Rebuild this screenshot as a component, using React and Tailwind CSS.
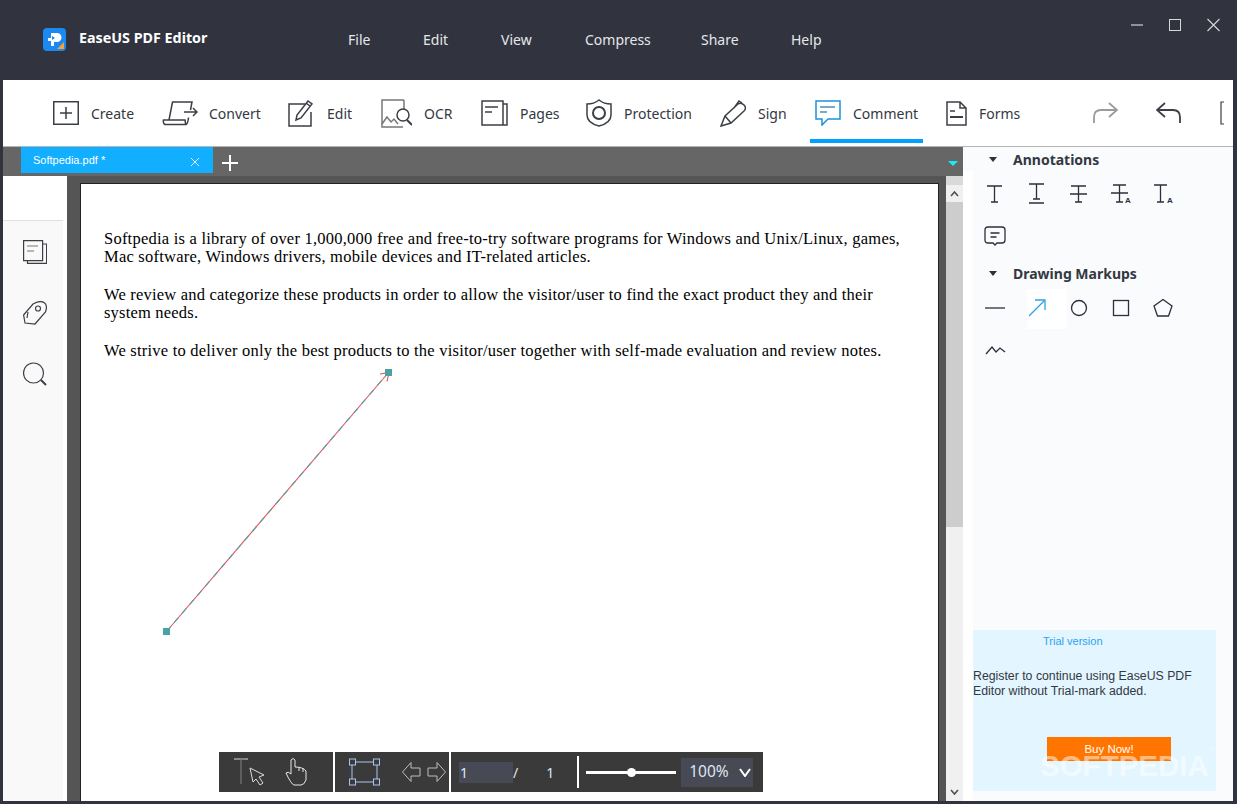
const sans = "font-['Noto_Sans',sans-serif]";

function Tool({ w, label, active, children }) {
  return (
    <div className={`relative flex h-full items-center ${w}`}>
      {children}
      <span className="mt-[1px] text-[14px] text-[#333842]">{label}</span>
      {active && <div className="absolute bottom-[3px] left-[-5px] h-[4px] w-[113px] bg-[#00a2ff]" />}
    </div>
  );
}

const S = { fill: "none", stroke: "#3c3f46", strokeWidth: 1.5 };

function Ic({ w, h, ml, children }) {
  return <svg width={w} height={h} viewBox={`0 0 ${w} ${h}`} className={`shrink-0 ${ml}`} {...S}>{children}</svg>;
}

function TopMenu() {
  return (
    <div className="flex h-[80px] shrink-0 bg-[#31343f]">
      <div className="ml-[43px] mt-[28px] flex h-[23px] w-[23px] items-center justify-center overflow-hidden rounded-[4px] bg-[#1b8af0]">
        <svg width="23" height="23" viewBox="0 0 23 23">
          <path d="M8 5h6a4.500 4.500 0 0 1 0 9h-3v4H8v-5H5v-3h3z" fill="#fff" />
          <path d="M9 8l3 2-3 2z" fill="#1b8af0" />
          <path d="M14 21l7-7v7z" fill="#f2a33a" />
        </svg>
      </div>
      <div className="ml-[13px] mt-[28px] h-[20px] w-[128px] whitespace-nowrap text-[14.3px] font-bold leading-[20px] text-white">EaseUS PDF Editor</div>
      <nav className="ml-[141px] mt-[30px] flex h-[20px] text-[14px] leading-[20px] text-[#e6e7ea]">
        <span className="w-[75px]">File</span>
        <span className="w-[78px]">Edit</span>
        <span className="w-[84px]">View</span>
        <span className="w-[116px]">Compress</span>
        <span className="w-[90px]">Share</span>
        <span>Help</span>
      </nav>
      <div className="ml-auto mr-[17px] mt-[18px] flex h-[14px] items-center gap-[26px]">
        <svg width="12" height="14" viewBox="0 0 12 14"><path d="M0 7h12" stroke="#a9abb0" strokeWidth="1.600" /></svg>
        <svg width="12" height="14" viewBox="0 0 12 14"><rect x=".5" y="1.500" width="11" height="11" fill="none" stroke="#d5d6d9" /></svg>
        <svg width="13" height="14" viewBox="0 0 13 14"><path d="M.5 1l12 12M12.500 1l-12 12" stroke="#d5d6d9" strokeWidth="1.100" /></svg>
      </div>
    </div>
  );
}

function Toolbar() {
  return (
    <div className="flex h-[67px] shrink-0 items-center overflow-hidden border-b border-[#b5b5b5] bg-white pl-[50px]">
      <Tool w="w-[109px]" label="Create">
        <Ic w={26} h={24} ml="mr-[12px]"><rect x=".75" y=".75" width="24.500" height="22.500" /><path d="M7 12h12M13 6v12" /></Ic>
      </Tool>
      <Tool w="w-[126px]" label="Convert">
        <Ic w={36} h={26} ml="mr-[11px]"><path d="M7 20L10.500 2H30l-1.500 8M7 20H1.500q-.8 3 1.500 4.500H24q2-1 2.500-7M7 20h16q.5 2 .5 4" /><path d="M22 12h13M31 8l4 4-4 4" /></Ic>
      </Tool>
      <Tool w="w-[93px]" label="Edit">
        <Ic w={27} h={28} ml="mr-[12px]"><path d="M17 5H1v22h22V13" /><path d="M8 21l1-5L20 2l4 3-11 14zM18 4l4 3" /></Ic>
      </Tool>
      <Tool w="w-[100px]" label="OCR">
        <Ic w={31} h={29} ml="mr-[12px]"><path d="M23 1H1v27h21M23 1v9" stroke="#777" /><path d="M1 25l5-7 4 5 3-3 4 5" stroke="#777" /><circle cx="22" cy="16" r="6" /><path d="M26 21l5 5" strokeWidth="2" /></Ic>
      </Tool>
      <Tool w="w-[105px]" label="Pages">
        <Ic w={27} h={26} ml="mr-[12px]"><path d="M1 1h21v24H1zM22 4h4v21H22" /><path d="M4 7h13M4 12h7" /></Ic>
      </Tool>
      <Tool w="w-[134px]" label="Protection">
        <Ic w={26} h={28} ml="mr-[12px]"><path d="M13 1q5 4 12 4v11q0 8-12 11Q1 24 1 16V5q7 0 12-4z" /><circle cx="13" cy="14" r="6" strokeWidth="2" /></Ic>
      </Tool>
      <Tool w="w-[95px]" label="Sign">
        <Ic w={26} h={27} ml="mr-[12px]"><path d="M1 26l4-10L18 4q3-2 6 1t0 6L11 23zM5 16l6 7M14 8l5-7 3 2" /></Ic>
      </Tool>
      <Tool w="w-[131px]" label="Comment" active>
        <svg width="26" height="26" viewBox="0 0 26 26" fill="none" stroke="#1d92d6" strokeWidth="1.500" className="mr-[12px] shrink-0"><path d="M1 1h24v18H13l-6 6v-6H1z" /><path d="M5 7h15M5 12h7" stroke="#4a8fb8" /></svg>
      </Tool>
      <Tool w="w-[140px]" label="Forms">
        <Ic w={21} h={25} ml="mr-[12px]"><path d="M1 1h13l6 6v17H1zM14 1v6h6" /><path d="M4 10h5" /><path d="M4 16h13" strokeWidth="2" /></Ic>
      </Tool>
      <svg width="26" height="22" viewBox="0 0 26 22" fill="none" stroke="#9a9a9a" strokeWidth="1.800" className="ml-[6px] shrink-0"><path d="M2 21v-6q0-7 7-7h15M17 1l8 7-8 7" /></svg>
      <svg width="26" height="22" viewBox="0 0 26 22" fill="none" stroke="#3c3f46" strokeWidth="1.800" className="ml-[38px] shrink-0"><path d="M24 21v-6q0-7-7-7H2M9 1L1 8l8 7" /></svg>
      <svg width="4" height="24" viewBox="0 0 4 24" fill="none" stroke="#3c3f46" strokeWidth="1.200" className="ml-[38px] shrink-0"><path d="M4 1H1v22h3" /></svg>
    </div>
  );
}

function TabBar() {
  return (
    <div className="flex h-[29px] shrink-0 items-start bg-[#666666] pl-[18px]">
      <div className="flex h-[26px] w-[192px] items-center bg-[#12aeff] pl-[12px] font-['Liberation_Sans',sans-serif] text-[11px] text-white">
        Softpedia.pdf *
        <svg width="10" height="10" viewBox="0 0 10 10" className="ml-auto mr-[13px] mt-[3px]"><path d="M1 1l8 8M9 1l-8 8" stroke="#e8f6ff" /></svg>
      </div>
      <svg width="16" height="16" viewBox="0 0 16 16" className="ml-[9px] mt-[8px]"><path d="M8 0v16M0 8h16" stroke="#fff" strokeWidth="2" /></svg>
      <div className="ml-auto mr-[5px] mt-[14px] h-0 w-0 border-x-[5px] border-t-[5px] border-x-transparent border-t-[#1de9f5]" />
    </div>
  );
}

function LeftRail() {
  return (
    <div className="flex w-[64px] shrink-0 flex-col bg-white">
      <div className="h-[45px] w-[60px] border-b border-[#e0e0e0]" />
      <div className="flex w-[60px] flex-1 flex-col items-center gap-[37px] bg-[#f9f9f9] pl-[4px] pt-[19px]">
        <svg width="24" height="24" viewBox="0 0 24 24" fill="none" stroke="#3c3f46" strokeWidth="1.200"><path d="M.6.6h19v20H.6zM19.600 4h4v19.400H4.500v-3" /><path d="M4 6h11M4 11h7" stroke="#777" /></svg>
        <svg width="24" height="24" viewBox="0 0 24 24" fill="none" stroke="#3c3f46" strokeWidth="1.200"><path d="M.6 14L10 3Q17-1 21 1.500t1.500 9.500L12 23l-10-1z" /><circle cx="15" cy="7.500" r="2.500" /><path d="M4 17l1-6" /></svg>
        <svg width="24" height="24" viewBox="0 0 24 24" fill="none" stroke="#3c3f46" strokeWidth="1.200"><circle cx="10.500" cy="11" r="10" /><path d="M18 18l5 5" strokeWidth="2" /></svg>
      </div>
    </div>
  );
}

function PdfPage() {
  return (
    <div className="relative ml-[13px] mt-[7px] h-[700px] w-[859px] shrink-0 border border-[#222] bg-white pl-[23px] pt-[46px] font-['Liberation_Serif',serif] text-[16.5px] leading-[18px] text-black">
      <p className="whitespace-nowrap tracking-[0.23px]">Softpedia is a library of over 1,000,000 free and free-to-try software programs for Windows and Unix/Linux, games,<br />Mac software, Windows drivers, mobile devices and IT-related articles.</p>
      <p className="mt-[20px] whitespace-nowrap tracking-[0.2px]">We review and categorize these products in order to allow the visitor/user to find the exact product they and their<br />system needs.</p>
      <p className="mt-[20px] whitespace-nowrap tracking-[0.22px]">We strive to deliver only the best products to the visitor/user together with self-made evaluation and review notes.</p>
      <svg width="240" height="275" viewBox="0 0 240 275" fill="none" className="absolute left-[80px] top-[183px]">
        <path d="M5.500 264.500L227.500 5.500" stroke="#ef4d55" strokeWidth="1.100" />
        <path d="M5.500 264.500L227.500 5.500" stroke="#45a5a5" strokeWidth="1.100" strokeDasharray="6 6" />
        <path d="M219 7l9-1.500-2 9" stroke="#e2484f" strokeWidth="1" />
        <rect x="224" y="2" width="7" height="7" fill="#4aa3a3" />
        <rect x="2" y="261" width="7" height="7" fill="#4aa3a3" />
      </svg>
    </div>
  );
}

function BottomBar() {
  return (
    <div className="absolute bottom-[9px] left-[216px] flex h-[40px] gap-[2px] text-[#d6d8dd]">
      <div className="flex w-[114px] items-center bg-[#3a3a3a] pl-[15px]">
        <svg width="38" height="30" viewBox="0 0 38 30" fill="none" stroke="#dcdcdc" strokeWidth="1"><path d="M0 2h14" /><path d="M11 2h-4v25" stroke="#777" strokeWidth="1.200" /><path d="M16 11l14 7-5 2 4 6-3 2-4-6-3 3z" /></svg>
        <svg width="24" height="30" viewBox="0 0 24 30" fill="none" stroke="#e8e8e8" strokeWidth="1" className="ml-[13px]"><path d="M6 17V3q2-3 4 0v7q8 0 11 4v9q-2 5-5 5H9q-3-1-8-12 2-2 5 1zM14 10v4M18 11v4" /></svg>
      </div>
      <div className="flex w-[114px] items-center bg-[#3a3a3a] pl-[14px]">
        <svg width="32" height="30" viewBox="0 0 32 30" fill="none" stroke="#a9c4ee" strokeWidth="1"><path d="M6 5h19M3 8v14M28 8v14M6 25h19" /><rect x=".5" y="2" width="6" height="6" /><rect x="24.500" y="2" width="6" height="6" /><rect x=".5" y="22" width="6" height="6" /><rect x="24.500" y="22" width="6" height="6" /></svg>
        <svg width="44" height="22" viewBox="0 0 44 22" fill="none" stroke="#bdbdbd" strokeWidth="1" className="ml-[21px] shrink-0"><path d="M.5 11L9 1.500V7h9v8H9v5.500z" /><path d="M43.500 11L35 1.500V7h-9v8h9v5.500z" /></svg>
      </div>
      <div className="relative flex w-[312px] items-center bg-[#3a3a3a] text-[14px]">
        <div className="ml-[8px] h-[21px] w-[54px] bg-[#474a55] pl-[1px] leading-[21px] text-[#d8e8f8]">1</div>
        <span className="text-[#e6e6e6]">/</span>
        <span className="ml-[28px] text-[#d8e8f8]">1</span>
        <div className="ml-[23px] h-[32px] w-[2px] bg-white" />
        <div className="relative ml-[7px] h-[3px] w-[90px] bg-white">
          <div className="absolute left-[41px] top-[-3px] h-[9px] w-[9px] rounded-full bg-white" />
        </div>
        <div className="ml-[5px] flex h-[29px] w-[72px] items-center bg-[#474a55] pl-[8px] text-[15.5px] text-[#dfe6ef]">
          100%
          <svg width="12" height="9" viewBox="0 0 12 9" className="ml-[10px]"><path d="M1 1l5 7 5-7" fill="none" stroke="#fff" strokeWidth="2" /></svg>
        </div>
      </div>
    </div>
  );
}

function Scrollbar() {
  return (
    <div className="flex w-[17px] shrink-0 flex-col bg-[#f0f0f0]">
      <div className="h-[9px] bg-[#d9d9d9]" />
      <div className="flex h-[17px] items-center justify-center">
        <svg width="9" height="7" viewBox="0 0 9 7"><path d="M1 6l3.500-4L8 6" fill="none" stroke="#505050" strokeWidth="1.600" /></svg>
      </div>
      <div className="h-[325px] bg-[#cdcdcd]" />
      <div className="flex flex-1 items-end justify-center pb-[5px]">
        <svg width="9" height="7" viewBox="0 0 9 7"><path d="M1 1l3.500 4L8 1" fill="none" stroke="#505050" strokeWidth="1.600" /></svg>
      </div>
    </div>
  );
}

function Section({ title, children }) {
  return (
    <>
      <div className="flex h-[24px] items-center pl-[16px]">
        <div className="h-0 w-0 border-x-[4px] border-t-[5px] border-x-transparent border-t-[#2d2f3a]" />
        <span className="ml-[16px] text-[14px] font-bold text-[#333842]">{title}</span>
      </div>
      <div className="grid grid-cols-[repeat(5,42px)] auto-rows-[42px] pl-[1px] pt-[2px]">{children}</div>
    </>
  );
}

function Cell({ hl, children }) {
  return <div className="relative flex h-[42px] w-[42px] items-center justify-center">
    {hl && <div className="absolute left-[11px] top-[2px] h-[40px] w-[40px] bg-white" />}
    <svg width="24" height="24" viewBox="0 0 24 24" fill="none" stroke={hl ? "#2ba2e6" : "#2d2f3a"} strokeWidth="1.300" className="relative">{children}</svg>
  </div>;
}

const A = () => <text x="16" y="21" fontSize="8" fontWeight="700" fontFamily="Liberation Sans" fill="#2d2f3a" stroke="none">A</text>;

function RightPanel() {
  return (
    <div className="relative flex w-[270px] shrink-0 flex-col bg-[#fafbfd] pl-[10px]">
      <div className="absolute bottom-0 left-0 top-[24px] w-[10px] bg-white" />
      <div className="relative w-[243px] flex-1">
        <Section title="Annotations">
          <Cell><path d="M4 4h15M11.500 4v16M8 20h7" /></Cell>
          <Cell><path d="M4 2h15M11.500 2v15M8 17h7M4 21h15" /></Cell>
          <Cell><path d="M4 4h15M11.500 4v16M8 20h7M3 12h17" /></Cell>
          <Cell><path d="M4 3h13M10.500 3v17M7 20h7M2 11h17" /><A /></Cell>
          <Cell><path d="M3 3h13M9.500 3v17M6 20h7" /><A /></Cell>
          <Cell><path d="M5 3h14q3 0 3 3v10q0 3-3 3h-5l-2 2-2-2H5q-3 0-3-3V6q0-3 3-3zM7.500 9h9M7.500 13h6" /></Cell>
        </Section>
        <div className="h-[4px]" />
        <Section title="Drawing Markups">
          <Cell><path d="M2 12h20" /></Cell>
          <Cell hl><path d="M4 20L19 5M10 4h10v10" /></Cell>
          <Cell><circle cx="12" cy="12" r="7.500" /></Cell>
          <Cell><rect x="4.500" y="4.500" width="15" height="15" /></Cell>
          <Cell><path d="M12 3.500l9 6.500-3.500 10h-11L3 10z" /></Cell>
          <Cell><path d="M3 16l6-7 4 5 4-4 5 4" /></Cell>
        </Section>
        <div className="absolute bottom-[10px] left-0 flex h-[161px] w-[243px] flex-col bg-[#e3f5ff] font-['Liberation_Sans',sans-serif] text-[12.3px] text-[#333842]">
          <div className="ml-[70px] mt-[4px] h-[14px] text-[11px] leading-[14px] text-[#2aa3f0]">Trial version</div>
          <p className="mt-[21px] whitespace-nowrap leading-[15px]">Register to continue using EaseUS PDF<br />Editor without Trial-mark added.</p>
          <div className="ml-[74px] mt-[38px] flex h-[24px] w-[124px] items-center justify-center bg-[#ff7500] pt-[1px] text-[11.5px] text-white">Buy Now!</div>
        </div>
      </div>
    </div>
  );
}

export default function App() {
  return (
    <div className={`relative flex h-[804px] w-[1237px] flex-col overflow-hidden bg-[#31343f] ${sans}`}>
      <TopMenu />
      <div className="flex min-h-0 flex-1 flex-col pb-[3px] pl-[3px] pr-[4px]">
        <Toolbar />
        <div className="flex min-h-0 flex-1">
          <div className="flex min-w-0 flex-1 flex-col">
            <TabBar />
            <div className="relative flex min-h-0 flex-1 overflow-hidden bg-[#555555]">
              <LeftRail />
              <div className="flex h-full w-[879px] shrink-0 overflow-hidden"><PdfPage /></div>
              <Scrollbar />
              <BottomBar />
            </div>
          </div>
          <RightPanel />
        </div>
      </div>
      <div className="pointer-events-none absolute left-[1040px] top-[744px] whitespace-nowrap font-['Liberation_Sans',sans-serif] text-[29.5px] font-bold text-white/50">SOFTPEDIA<span className="ml-[1px] align-top text-[8px] font-normal">®</span></div>
    </div>
  );
}
